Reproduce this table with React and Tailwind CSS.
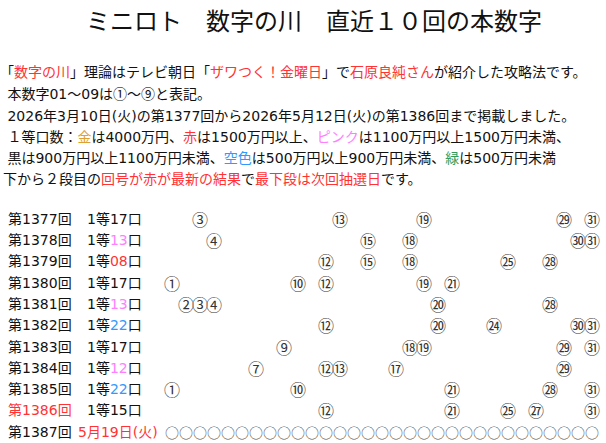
import React from 'react';

// 直近10回の本数字（1〜31）
const rows = [
  { no: 1377, count: '17', color: '', nums: [3, 13, 19, 29, 31] },
  { no: 1378, count: '13', color: 'text-[#ff80ff]', nums: [4, 15, 18, 30, 31] },
  { no: 1379, count: '08', color: 'text-[#ff3333]', nums: [12, 15, 18, 25, 28] },
  { no: 1380, count: '17', color: '', nums: [1, 10, 12, 19, 21] },
  { no: 1381, count: '13', color: 'text-[#ff80ff]', nums: [2, 3, 4, 20, 28] },
  { no: 1382, count: '22', color: 'text-[#3399ff]', nums: [12, 20, 24, 30, 31] },
  { no: 1383, count: '17', color: '', nums: [9, 18, 19, 29, 31] },
  { no: 1384, count: '12', color: 'text-[#ff80ff]', nums: [7, 12, 13, 17, 29] },
  { no: 1385, count: '22', color: 'text-[#3399ff]', nums: [1, 10, 21, 28, 31] },
  { no: 1386, count: '15', color: '', nums: [12, 21, 25, 27, 31], latest: true },
];

const circled = (n) =>
  n <= 20 ? String.fromCharCode(0x2460 + n - 1) : String.fromCharCode(0x3251 + n - 21);

const cells = Array.from({ length: 31 }, (_, i) => i + 1);

const Red = ({ children }) => <span className="text-[#ff3333]">{children}</span>;

const App = () => {
  return (
    <div className="w-[606px] h-[443px] bg-white text-[#111] font-['DejaVu_Sans','Noto_Sans_CJK_JP',sans-serif] overflow-hidden">
      {/* タイトル */}
      <h1 className="pl-[86px] text-[24px] leading-[40px] whitespace-pre font-['Noto_Sans_CJK_JP',sans-serif]">
        ミニロト　数字の川　直近１０回の本数字
      </h1>

      {/* 説明 */}
      <div className="mt-[22px] text-[14px] leading-[21.3px] whitespace-pre">
        <div>
          「<Red>数字の川</Red>」理論はテレビ朝日「<Red>ザワつく！金曜日</Red>」で<Red>石原良純さん</Red>が紹介した攻略法です。
        </div>
        <div className="pl-[3px]">
          {' '}本数字01～09は<span className="font-['Noto_Sans_CJK_JP']">①～⑨</span>と表記。
        </div>
        <div className="pl-[3px]">
          {' '}2026年3月10日(火)の第1377回から2026年5月12日(火)の第1386回まで掲載しました。
        </div>
        <div className="pl-[3px]">
          {' '}１等口数：<span className="text-[#e0a030]">金</span>は4000万円、<Red>赤</Red>は1500万円以上、
          <span className="text-[#ff80ff]">ピンク</span>は1100万円以上1500万円未満、
        </div>
        <div className="pl-[3px]">
          {' '}黒は900万円以上1100万円未満、<span className="text-[#3399ff]">空色</span>は500万円以上900万円未満、
          <span className="text-[#339955]">緑</span>は500万円未満
        </div>
        <div className="pl-[3px]">
          下から２段目の<Red>回号が赤が最新の結果</Red>で<Red>最下段は次回抽選日</Red>です。
        </div>
      </div>

      {/* 数字の川 */}
      <div className="mt-[18px] text-[14px] leading-[21.3px]">
        {rows.map((r) => (
          <div key={r.no} className="flex pl-[8px]">
            <span className={`w-[79px] ${r.latest ? 'text-[#ff3333]' : ''}`}>第{r.no}回</span>
            <span className="w-[78px]">
              1等<span className={r.color}>{r.count}</span>口
            </span>
            <div className="flex font-['Noto_Sans_CJK_JP'] text-[16px] text-[#333]">
              {cells.map((n) => (
                <span key={n} className="w-[14px] flex justify-center overflow-visible">
                  {r.nums.includes(n) ? circled(n) : ''}
                </span>
              ))}
            </div>
          </div>
        ))}
        <div className="flex pl-[8px]">
          <span className="w-[70px]">第1387回</span>
          <span className="w-[87px] text-[#ff3333]">5月19日(火)</span>
          <div className="flex font-['Noto_Sans_CJK_JP'] text-[#555]">
            {cells.map((n) => (
              <span key={n} className="w-[14px] text-center">○</span>
            ))}
          </div>
        </div>
      </div>
    </div>
  );
};

export default App;
